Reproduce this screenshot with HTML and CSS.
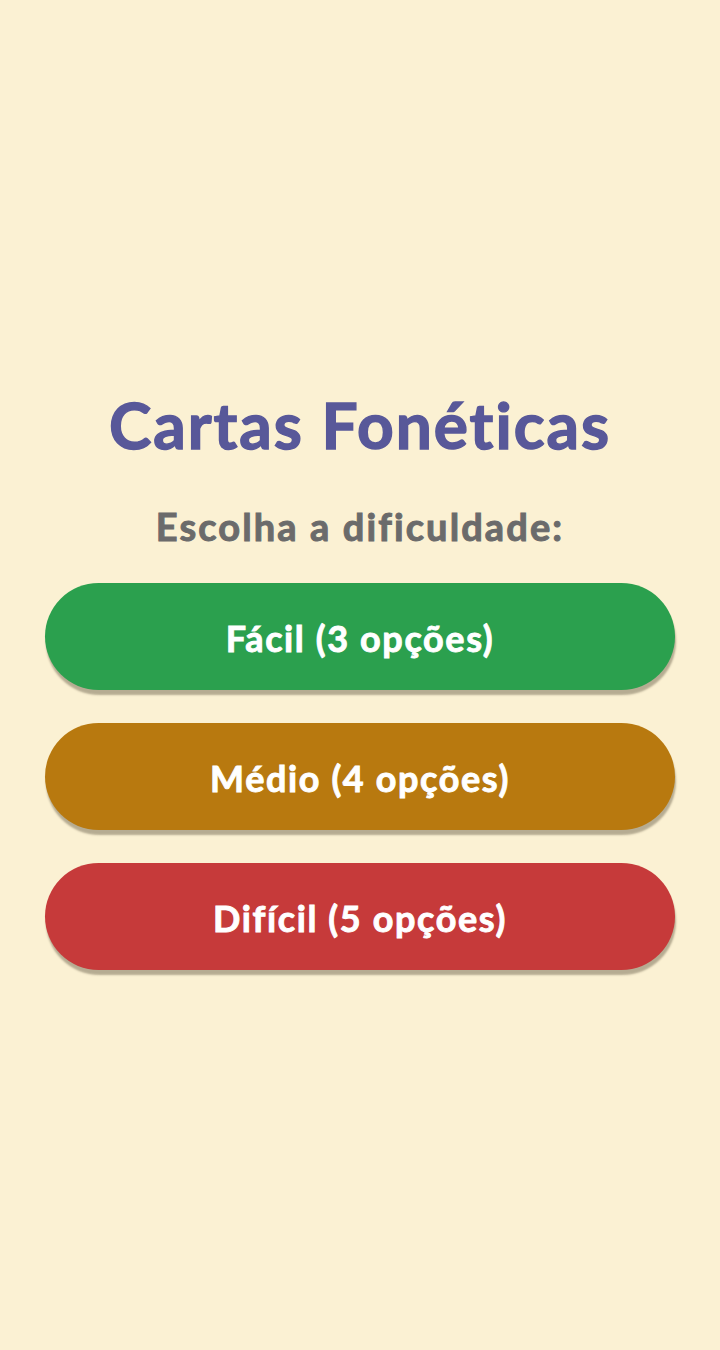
FILE: index.html
```html
<!DOCTYPE html>
<html lang="pt">
<head>
    <meta charset="UTF-8">
    <meta name="viewport" content="width=device-width, initial-scale=1.0">
    <title>Cartas Fonéticas</title>
    <link rel="stylesheet" href="styles.css">
</head>
<body>

<div class="container">
    <h1>Cartas Fonéticas</h1>

    <h2>Escolha a dificuldade:</h2>

    <!-- Difficulty buttons -->
    <div class="levels">
        <button class="level-btn easy">Fácil (3 opções)</button>
        <button class="level-btn medium">Médio (4 opções)</button>
        <button class="level-btn hard">Difícil (5 opções)</button>
    </div>
</div>

</body>
</html>
```

FILE: styles.css
```css
body {
    font-family: Lato, "Noto Sans", sans-serif;
    font-variant-ligatures: none;
    background-color: #fbf1d3;
    display: flex;
    justify-content: center;
    align-items: center;
    min-height: 100vh;
    margin: 0;
}

.container {
    width: 100%;
    padding: 7px 45px 0;
    box-sizing: border-box;
    text-align: center;
}

h1 {
    font-size: 64px;
    font-weight: 700;
    letter-spacing: 2px;
    -webkit-text-stroke: 1.4px #585899;
    color: #585899;
    margin: 0 0 40px;
    line-height: 1.2;
}

h2 {
    font-size: 38px;
    font-weight: 700;
    letter-spacing: 2.1px;
    -webkit-text-stroke: 1px #6b6b6b;
    color: #6b6b6b;
    margin: 0 0 33px;
    line-height: 1.2;
}

.levels {
    display: flex;
    flex-direction: column;
    gap: 33px;
}

.level-btn {
    height: 107px;
    padding-top: 4px;
    border: none;
    border-radius: 54px;
    font-family: inherit;
    font-variant-ligatures: none;
    font-size: 36px;
    font-weight: 700;
    letter-spacing: 1.6px;
    -webkit-text-stroke: 0.9px white;
    color: white;
    cursor: pointer;
    box-shadow: 1px 5px 2px rgba(80, 70, 50, 0.4);
}

.easy {
    background-color: #2ba04e;
}

.medium {
    background-color: #b8790f;
}

.hard {
    background-color: #c63a3a;
}
```
